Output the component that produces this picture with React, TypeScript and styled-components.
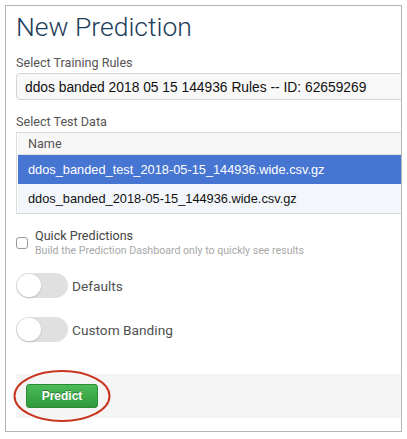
import React from "react";
import styled, { createGlobalStyle } from "styled-components";

const Global = createGlobalStyle`
  html, body { margin: 0; padding: 0; background: #ffffff; }
  body { font-family: Roboto, "Liberation Sans", sans-serif; }
  * { box-sizing: border-box; }
`;

const Panel = styled.div`
  margin: 5px 0 0 5px;
  width: 397px;
  height: 427px;
  border: 1px solid #b4b4b4;
  overflow: hidden;
  padding: 5px 0 0 10px;
`;

const Content = styled.div`
  width: 440px;
  display: flex;
  flex-direction: column;
`;

const Title = styled.h1`
  margin: 0;
  font-family: Roboto, sans-serif;
  font-weight: 300;
  font-size: 26.5px;
  line-height: 32px;
  color: #1c3d5a;
`;

const Label = styled.div<{ $top: number }>`
  margin-top: ${(p) => p.$top}px;
  font-family: Roboto, sans-serif;
  font-size: 12.6px;
  line-height: 16px;
  color: #555555;
`;

const Select = styled.div`
  margin-top: 2px;
  height: 27px;
  border: 1px solid #d4d4d4;
  border-radius: 4px;
  background: #f8f8f8;
  padding: 2px 0 0 8px;
  font-family: "Liberation Sans", Arial, sans-serif;
  font-size: 13.8px;
  line-height: 23px;
  color: #111111;
  white-space: nowrap;
`;

const Table = styled.div`
  margin-top: 2px;
  width: 386px;
  border: 1px solid #dcdcdc;
  border-right: none;
  padding: 0 0 0 1px;
  display: flex;
  flex-direction: column;
`;

const HeaderCell = styled.div`
  height: 22px;
  border-bottom: 1px solid #e2e2e2;
  background: #f7f7f7;
  padding-left: 10px;
  font-family: Roboto, sans-serif;
  font-size: 12.6px;
  line-height: 21px;
  color: #555555;
`;

const Row = styled.div<{ $selected?: boolean }>`
  height: 29px;
  padding-left: 10px;
  background: ${(p) => (p.$selected ? "#4775d2" : "#f3f6fb")};
  color: ${(p) => (p.$selected ? "#ffffff" : "#111111")};
  font-family: "Liberation Sans", Arial, sans-serif;
  font-size: 12.8px;
  line-height: 29px;
  white-space: nowrap;
`;

const CheckRow = styled.label`
  margin-top: 14px;
  display: flex;
  align-items: center;
  gap: 7px;
`;

const Box = styled.span`
  width: 12px;
  height: 12px;
  border: 1px solid #9a9a9a;
  border-radius: 3px;
  background: #ffffff;
  flex: none;
`;

const CheckText = styled.div`
  display: flex;
  flex-direction: column;
`;

const CheckTitle = styled.div`
  font-family: Roboto, sans-serif;
  font-size: 12.6px;
  line-height: 16px;
  color: #444444;
`;

const CheckSub = styled.div`
  font-family: Roboto, sans-serif;
  font-size: 10.6px;
  line-height: 13px;
  color: #a8a8a8;
`;

const ToggleRow = styled.div<{ $top: number }>`
  margin-top: ${(p) => p.$top}px;
  display: flex;
  align-items: center;
  gap: 4px;
`;

const Track = styled.span`
  width: 52px;
  height: 25px;
  border-radius: 13px;
  background: #e0e0e0;
  padding: 1px;
  display: flex;
  align-items: center;
  flex: none;
`;

const Knob = styled.span`
  width: 24px;
  height: 23px;
  border-radius: 50%;
  background: #ffffff;
  box-shadow: 0 1px 2px rgba(0, 0, 0, 0.18);
`;

const ToggleLabel = styled.span`
  font-family: Roboto, sans-serif;
  font-size: 13.7px;
  color: #505050;
`;

const Footer = styled.div`
  position: relative;
  margin-top: 32px;
  width: 385px;
  height: 44px;
  background: #f5f5f5;
  padding: 10px;
`;

const PredictButton = styled.button`
  width: 72px;
  height: 24px;
  border: 1px solid #2b8a37;
  border-radius: 3px;
  background: linear-gradient(#4cbb58, #2e9a3c);
  color: #ffffff;
  font-family: "Liberation Sans", Arial, sans-serif;
  font-weight: 700;
  font-size: 12px;
  text-shadow: 0 -1px 0 rgba(0, 0, 0, 0.35);
  padding: 0;
  cursor: pointer;
`;

const Circle = styled.svg`
  position: absolute;
  left: -6px;
  top: -8px;
  pointer-events: none;
`;

export default function App() {
  return (
    <>
      <Global />
      <Panel>
        <Content>
          <Title>New Prediction</Title>
          <Label $top={12}>Select Training Rules</Label>
          <Select>ddos banded 2018 05 15 144936 Rules -- ID: 62659269</Select>
          <Label $top={14}>Select Test Data</Label>
          <Table>
            <HeaderCell>Name</HeaderCell>
            <Row $selected>ddos_banded_test_2018-05-15_144936.wide.csv.gz</Row>
            <Row>ddos_banded_2018-05-15_144936.wide.csv.gz</Row>
          </Table>
          <CheckRow>
            <Box />
            <CheckText>
              <CheckTitle>Quick Predictions</CheckTitle>
              <CheckSub>Build the Prediction Dashboard only to quickly see results</CheckSub>
            </CheckText>
          </CheckRow>
          <ToggleRow $top={16}>
            <Track>
              <Knob />
            </Track>
            <ToggleLabel>Defaults</ToggleLabel>
          </ToggleRow>
          <ToggleRow $top={19}>
            <Track>
              <Knob />
            </Track>
            <ToggleLabel>Custom Banding</ToggleLabel>
          </ToggleRow>
          <Footer>
            <PredictButton>Predict</PredictButton>
            <Circle width="104" height="60" viewBox="0 0 104 60">
              <ellipse cx="52" cy="30" rx="47.5" ry="25" fill="none" stroke="#c7341f" strokeWidth="2" />
            </Circle>
          </Footer>
        </Content>
      </Panel>
    </>
  );
}
